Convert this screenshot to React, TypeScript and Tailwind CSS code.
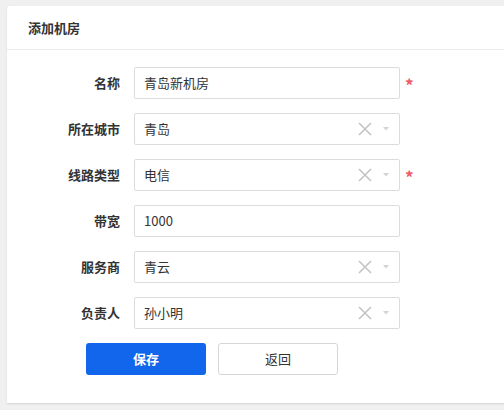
type Field = {
  label: string;
  value: string;
  select?: boolean;
  required?: boolean;
};

const fields: Field[] = [
  { label: '名称', value: '青岛新机房', required: true },
  { label: '所在城市', value: '青岛', select: true },
  { label: '线路类型', value: '电信', select: true, required: true },
  { label: '带宽', value: '1000' },
  { label: '服务商', value: '青云', select: true },
  { label: '负责人', value: '孙小明', select: true },
];

function FormRow({ field }: { field: Field }) {
  return (
    <div className="flex items-center h-8">
      <div className="w-[113px] text-right text-[13px] font-semibold text-[#333]">{field.label}</div>
      <div className="ml-[14px] w-[266px] h-8 border border-[#dcdcdc] rounded-[2px] bg-white flex items-center pl-[9px] pr-[10px]">
        <span className="flex-1 text-[13px] text-[#333]">{field.value}</span>
        {field.select && (
          <div className="flex items-center gap-[11px]">
            {/* clear */}
            <svg width="14" height="14" viewBox="0 0 14 14">
              <path d="M1 1 L13 13 M13 1 L1 13" stroke="#c4c4c4" strokeWidth="1.6" />
            </svg>
            <svg width="6" height="4" viewBox="0 0 6 4">
              <path d="M0 0 L6 0 L3 3.5 Z" fill="#d4d4d4" />
            </svg>
          </div>
        )}
      </div>
      {field.required && (
        <span className="ml-[5px] text-[#ef5a66] text-[17px] font-bold leading-none pt-[3px]">*</span>
      )}
    </div>
  );
}

export default function App() {
  return (
    <div
      className="w-[504px] h-[410px] bg-[#f0f0f0] pt-[6px] pl-[7px] overflow-hidden"
      style={{ fontFamily: '"Noto Sans CJK SC", "Noto Sans", sans-serif' }}
    >
      <div className="w-[520px] h-[397px] bg-white rounded-tl-[3px] shadow-[0_1px_2px_rgba(0,0,0,0.12)]">
        <div className="h-[44px] border-b border-[#ececec] flex items-center pl-[21px]">
          <span className="text-[13px] font-bold text-[#333]">添加机房</span>
        </div>
        <div className="pt-[17px] flex flex-col gap-[14px]">
          {fields.map((f) => (
            <FormRow key={f.label} field={f} />
          ))}
          <div className="flex items-center pl-[79px] gap-[12px]">
            <button className="w-[120px] h-8 rounded-[3px] bg-[#1266ec] text-white text-[13px] font-bold">保存</button>
            <button className="w-[120px] h-8 rounded-[3px] border border-[#d6d6d6] bg-white text-[#333] text-[13px]">返回</button>
          </div>
        </div>
      </div>
    </div>
  );
}
